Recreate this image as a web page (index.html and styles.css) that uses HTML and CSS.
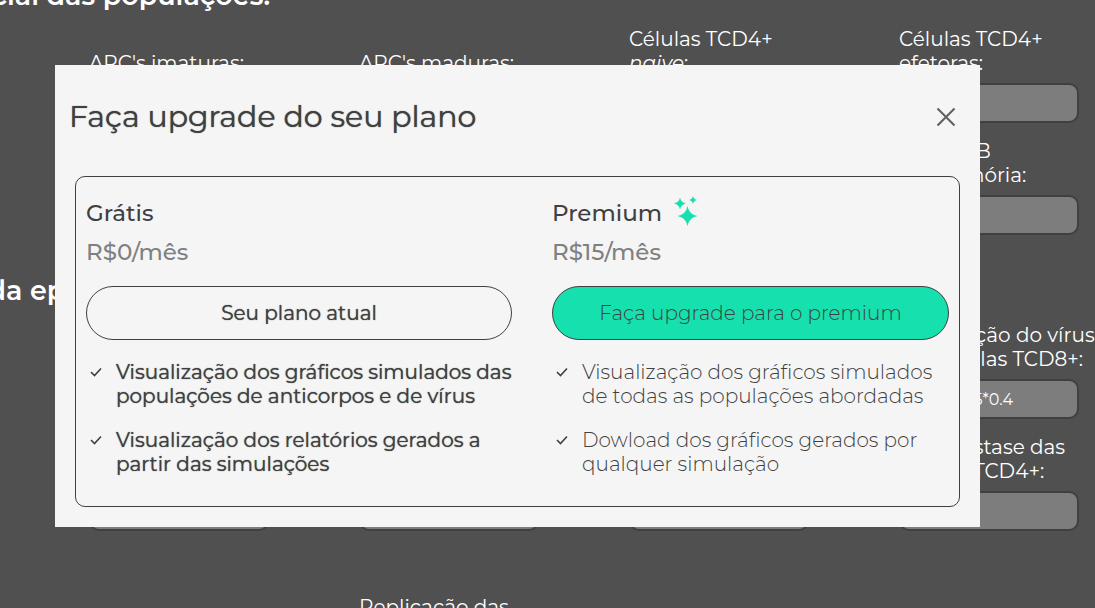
FILE: index.html
```html
<!DOCTYPE html>
<html lang="pt-BR">
<head>
<meta charset="utf-8">
<meta name="viewport" content="width=device-width, initial-scale=1">
<title>Faça upgrade do seu plano</title>
<link rel="stylesheet" href="styles.css">
</head>
<body>
<main class="page">
  <h2 class="section-title section-title-first">icial das populações:</h2>
  <form class="fields">
    <label class="field col-1"><span class="field-label">APC's imaturas:</span><input class="field-input" type="text"></label>
    <label class="field col-2"><span class="field-label">APC's maduras:</span><input class="field-input" type="text"></label>
    <label class="field col-3"><span class="field-label">Células TCD4+<br><em>naive</em>:</span><input class="field-input" type="text"></label>
    <label class="field col-4"><span class="field-label">Células TCD4+<br>efetoras:</span><input class="field-input" type="text"></label>
    <label class="field col-4"><span class="field-label">Células B<br>de memória:</span><input class="field-input" type="text"></label>
  </form>
  <h2 class="section-title section-title-short">da epidemia</h2>
  <form class="fields">
    <label class="field col-4"><span class="field-label">Eliminação do vírus<br>por células TCD8+:</span><input class="field-input" type="text" value="0.000005*0.4"></label>
    <label class="field col-1"><span class="field-label"></span><input class="field-input" type="text" aria-label="Parâmetro 1"></label>
    <label class="field col-2"><span class="field-label"></span><input class="field-input" type="text" aria-label="Parâmetro 2"></label>
    <label class="field col-3"><span class="field-label"></span><input class="field-input" type="text" aria-label="Parâmetro 3"></label>
    <label class="field col-4"><span class="field-label">Homeostase das<br>células TCD4+:</span><input class="field-input" type="text"></label>
  </form>
  <p class="next-label">Replicação das</p>
</main>

<section class="modal" role="dialog" aria-modal="true" aria-labelledby="modal-title">
  <header class="modal-header">
    <h1 class="modal-title" id="modal-title">Faça upgrade do seu plano</h1>
    <button class="close" type="button" aria-label="Fechar">
      <svg width="20" height="20" viewBox="0 0 20 20" fill="none" stroke="currentColor" stroke-width="2.1"><path d="M1.500 1.500l17 17M18.500 1.500l-17 17"/></svg>
    </button>
  </header>
  <div class="plans">
    <article class="plan plan-free">
      <h2 class="plan-name">Grátis</h2>
      <p class="plan-price">R$0/mês</p>
      <button class="plan-button" type="button">Seu plano atual</button>
      <ul class="benefits">
        <li class="benefit"><svg class="check" viewBox="0 0 12 10"><path d="M1 5l3.500 3.500L11 1.500"/></svg><span>Visualização dos gráficos simulados das<br>populações de anticorpos e de vírus</span></li>
        <li class="benefit"><svg class="check" viewBox="0 0 12 10"><path d="M1 5l3.500 3.500L11 1.500"/></svg><span>Visualização dos relatórios gerados a<br>partir das simulações</span></li>
      </ul>
    </article>
    <article class="plan plan-premium">
      <h2 class="plan-name">Premium
        <svg class="sparkles" viewBox="0 0 24 30" fill="currentColor"><path d="M13.500 10Q15 18.500 23.500 20Q15 21.500 13.500 30Q12 21.500 3.500 20Q12 18.500 13.500 10Z"/><path d="M6 1.500Q7 6.500 12 7.500Q7 8.500 6 13.500Q5 8.500 0 7.500Q5 6.500 6 1.500Z"/><path d="M19 0Q19.600 3.200 23 4Q19.600 4.800 19 8Q18.400 4.800 15 4Q18.400 3.200 19 0Z"/></svg>
      </h2>
      <p class="plan-price">R$15/mês</p>
      <button class="plan-button plan-button-premium" type="button">Faça upgrade para o premium</button>
      <ul class="benefits">
        <li class="benefit"><svg class="check" viewBox="0 0 12 10"><path d="M1 5l3.500 3.500L11 1.500"/></svg><span>Visualização dos gráficos simulados<br>de todas as populações abordadas</span></li>
        <li class="benefit"><svg class="check" viewBox="0 0 12 10"><path d="M1 5l3.500 3.500L11 1.500"/></svg><span>Dowload dos gráficos gerados por<br>qualquer simulação</span></li>
      </ul>
    </article>
  </div>
</section>
</body>
</html>
```
FILE: styles.css
```css
* { box-sizing: border-box; }
html, body { height: 100%; }
body {
  margin: 0;
  overflow: hidden;
  background: #505050;
  color: #ffffff;
  font-family: Montserrat, Inter, "Liberation Sans", sans-serif;
  font-size: 20px;
  line-height: 24px;
}
h1, h2, p, ul { margin: 0; padding: 0; }
button, input { font: inherit; color: inherit; }

.page { display: flow-root; }
.section-title {
  display: flex;
  justify-content: flex-end;
  white-space: nowrap;
  font-size: 27px;
  font-weight: 600;
  line-height: 32px;
}
.section-title-first { width: 270px; height: 47px; margin-top: -20px; }
.section-title-short { width: 161px; margin: 40px 0 16px; }
.fields {
  display: grid;
  grid-template-columns: repeat(4, 180px);
  gap: 16px 90px;
  padding-left: 89px;
}
.field { display: flex; flex-direction: column; gap: 8px; }
.field-label {
  display: block;
  height: 48px;
  white-space: nowrap;
  align-content: end;
}
.field-input {
  width: 100%;
  height: 40px;
  padding: 0 6px;
  border: 2px solid #404040;
  border-radius: 10px;
  background: #7d7d7d;
  font-size: 16px;
}
.col-1 { grid-column: 1; }
.col-2 { grid-column: 2; }
.col-3 { grid-column: 3; }
.col-4 { grid-column: 4; }
.next-label { padding: 64px 0 0 359px; }

.modal {
  position: absolute;
  top: 65px;
  left: 55px;
  right: 115px;
  padding: 30px 20px 20px;
  background: #f5f5f5;
  color: #404040;
}
.modal-header {
  display: flex;
  align-items: center;
  justify-content: space-between;
  height: 44px;
  margin: 0 4px 37px -6px;
}
.modal-title {
  font-size: 30px;
  font-weight: 400;
  line-height: 44px;
}
.modal-title,
.plan-free .plan-button,
.plan-free .benefits { text-shadow: 0 0 1px currentColor; }
.close {
  display: flex;
  padding: 0;
  border: 0;
  background: none;
  color: #606060;
}
.plans {
  display: grid;
  grid-template-columns: minmax(0, 426fr) minmax(0, 397fr);
  gap: 40px;
  padding: 16px 10px 30px;
  border: 1px solid #404040;
  border-radius: 10px;
}
.plan-name {
  display: flex;
  align-items: center;
  gap: 12px;
  height: 40px;
  font-size: 23px;
  font-weight: 500;
}
.sparkles { width: 24px; height: 30px; margin-bottom: 4px; color: #16e0ae; }
.plan-price {
  height: 53px;
  color: #808080;
  font-size: 23px;
  font-weight: 500;
  line-height: 38px;
}
.plan-button {
  width: 100%;
  height: 54px;
  border: 1px solid #404040;
  border-radius: 27px;
  background: #f5f5f5;
}
.plan-button-premium { background: #16e0ae; font-weight: 300; }
.benefits {
  display: flex;
  flex-direction: column;
  gap: 20px;
  padding-top: 20px;
  list-style: none;
}
.benefit {
  display: flex;
  gap: 14px;
  padding-left: 4px;
  white-space: nowrap;
}
.check {
  flex: none;
  width: 12px;
  height: 10px;
  margin-top: 7px;
  fill: none;
  stroke: #404040;
  stroke-width: 1.6;
}
.plan-premium .benefits { font-weight: 300; }
```
